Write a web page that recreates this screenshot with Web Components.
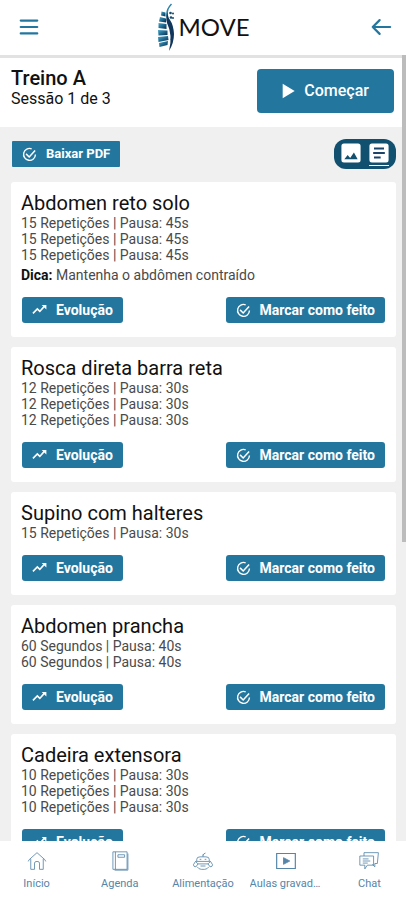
<!DOCTYPE html>
<html lang="pt-BR">
<head>
<meta charset="utf-8">
<meta name="viewport" content="width=device-width, initial-scale=1">
<title>Move – Treino A</title>
<style>
  :root {
    --brand: #23779f;
    --brand-dark: #12506f;
    --surface: #fff;
    --page: #f0f0f0;
  }
  body {
    margin: 0;
    font-family: Roboto, "Liberation Sans", sans-serif;
    color: #111;
    background: var(--surface);
  }
</style>
</head>
<body>
<move-app>
  <app-header slot="header"></app-header>
  <session-bar name="Treino A" progress="Sessão 1 de 3"></session-bar>
  <list-tools></list-tools>
  <exercise-list>
    <exercise-card name="Abdomen reto solo" tip="Mantenha o abdômen contraído">
      <span>15 Repetições | Pausa: 45s</span>
      <span>15 Repetições | Pausa: 45s</span>
      <span>15 Repetições | Pausa: 45s</span>
    </exercise-card>
    <exercise-card name="Rosca direta barra reta">
      <span>12 Repetições | Pausa: 30s</span>
      <span>12 Repetições | Pausa: 30s</span>
      <span>12 Repetições | Pausa: 30s</span>
    </exercise-card>
    <exercise-card name="Supino com halteres">
      <span>15 Repetições | Pausa: 30s</span>
    </exercise-card>
    <exercise-card name="Abdomen prancha">
      <span>60 Segundos | Pausa: 40s</span>
      <span>60 Segundos | Pausa: 40s</span>
    </exercise-card>
    <exercise-card name="Cadeira extensora">
      <span>10 Repetições | Pausa: 30s</span>
      <span>10 Repetições | Pausa: 30s</span>
      <span>10 Repetições | Pausa: 30s</span>
    </exercise-card>
  </exercise-list>
  <tab-bar slot="footer">
    <tab-item icon="home">Início</tab-item>
    <tab-item icon="book">Agenda</tab-item>
    <tab-item icon="food">Alimentação</tab-item>
    <tab-item icon="video">Aulas gravadas</tab-item>
    <tab-item icon="chat">Chat</tab-item>
  </tab-bar>
</move-app>

<script>
const ICONS = {
  menu: '<path d="M3 5h18M3 12h18M3 19h18" stroke-width="2.4" stroke-linecap="round"/>',
  back: '<path d="M22 12H3M10.500 4.500L3 12l7.500 7.500" stroke-width="2.400" stroke-linecap="round" stroke-linejoin="round"/>',
  play: '<path d="M4 1l18 11L4 23z" fill="currentColor" stroke="none"/>',
  check: '<path d="M15.500 3A9.500 9.500 0 1 0 21.500 12" stroke-width="2.200"/><path d="M6.500 11l5 5L21 5.500" stroke-width="2.400"/>',
  trend: '<path d="M1.500 16.500l7-7 4 4L20 5" stroke-width="2.600"/><path d="M15.500 3H23v7.500z" fill="currentColor" stroke="none"/>',
  image: '<rect x="0.500" y="0.500" width="23" height="23" rx="3" fill="currentColor" stroke="none"/><path d="M4 19.500l4-5 3 3.500 4.500-6.500L20 19.500z" fill="#12506f" stroke="none"/>',
  text: '<rect x="0.500" y="0.500" width="23" height="23" rx="3" fill="currentColor" stroke="none"/><path d="M6 6.500h12M5 12h14M6 17.500h8" stroke="#1b4468" stroke-width="2.400"/>',
  home: '<path d="M2.500 10.500L12 2l9.500 8.500M4.500 9.500V22H9v-7.500q0-2 3-2t3 2V22h4.500V9.500M1.500 12.500l1-2M22.500 12.500l-1-2"/>',
  book: '<path d="M3.500 1h17v21h-17zM6.500 1v21M9.500 4.500h8v3h-8zM21.500 3v20h-16"/>',
  food: '<path d="M12 7V4M12 5.500q1-3 3-3M4.500 12V10q0-3 4-3h7q4 0 4 3v2M3 12.500h18M8 10h2M14 10h2M3 12.500l-2.500 4q0 2.500 3 2.500l2.500-3.500zM21 12.500l2.500 4q0 2.500-3 2.500L18 15.500zM6 15.500h12M5 19q2 3 5 3h4q3 0 5-3M9 18h6"/>',
  video: '<path d="M0.800 3h22.400v18H.800z" stroke-width="1.400"/><path d="M9 8l7.500 4L9 16z" fill="currentColor"/>',
  chat: '<path d="M6 6V2h17.300l-1.300 13h-3v4l-3-3"/><path d="M1 6h16.500v11H10l-3 4.500V17H1zM4.500 9.500h7M4.500 12h9M4.500 14.500h6"/>'
};

/* Base class: clones the element's template into an open shadow root. */
class Component extends HTMLElement {
  connectedCallback() {
    if (this.shadowRoot) return;
    const t = document.createElement('template');
    t.innerHTML = this.render();
    this.attachShadow({ mode: 'open' }).append(t.content.cloneNode(true));
  }
  attr(n) { return this.getAttribute(n) || ''; }
}

class UiIcon extends Component {
  render() {
    return `<style>
      :host { display: block; flex: none; width: 16px; height: 16px; }
      svg { display: block; width: 100%; height: 100%; overflow: visible; }
    </style>
    <svg viewBox="0 0 24 24" fill="none" stroke="currentColor" aria-hidden="true">${ICONS[this.attr('name')]}</svg>`;
  }
}

class ActionButton extends Component {
  render() {
    return `<style>
      :host { display: inline-block; }
      button {
        display: flex; align-items: center; gap: 9px;
        height: 26px; padding: 0 10px; border: 0; border-radius: 3px;
        background: var(--brand); color: #fff; cursor: pointer;
        font: 700 14px/16px Roboto, "Liberation Sans", sans-serif;
      }
      ui-icon { width: 15px; height: 15px; }
      :host([size="small"]) button { font-size: 13px; border-radius: 1px; }
      :host([size="large"]) button { font-size: 16px; font-weight: 500; height: 44px; padding: 0 25px 0 23px; gap: 8px; border-radius: 4px; }
      :host([size="large"]) ui-icon { width: 16px; height: 16px; }
    </style>
    <button type="button"><ui-icon name="${this.attr('icon')}"></ui-icon><slot></slot></button>`;
  }
}

class BrandLogo extends Component {
  render() {
    return `<style>
      :host { display: flex; align-items: center; gap: 4px; margin-right: 4px; font: 400 24px/32px Lato, sans-serif; color: #111; }
      svg { display: block; width: 18px; height: 48px; }
    </style>
    <svg viewBox="0 0 18 48" aria-hidden="true">
      <defs><linearGradient id="g" x1="0" y1="0" x2="1" y2="1"><stop offset="0" stop-color="#4aa6c8"/><stop offset="0.500" stop-color="#1f6a91"/><stop offset="1" stop-color="#0c2748"/></linearGradient></defs>
      <g fill="url(#g)">
        <path d="M5.500 8.500l4 1v4l-4.500-1z"/>
        <path d="M4 14l6 1.500v4l-7-1z"/>
        <path d="M2.500 20l8 1v5l-8-1z"/>
        <path d="M2 27l9.500.500v4.500l-9 .5z"/>
        <path d="M2 34l10-1 .500 4-10 2z"/>
        <path d="M3 40l9-2-.500 4-8 2z"/>
      </g>
      <g fill="#174b70">
        <circle cx="14.500" cy="10" r="1.300"/><circle cx="17" cy="10.500" r="1"/>
        <circle cx="15" cy="14.500" r="1.300"/><circle cx="17" cy="15" r="1"/>
      </g>
      <path d="M15.500 1Q9 8 11.500 15q3 5 4.500 11t-1 11" fill="none" stroke="#2b83ab" stroke-width="1.400"/>
      <path d="M12.500 7q-2 5 1.500 10t4 14q0 9-5 17 2-8 1.500-15t-3.500-13q-2-7 1.500-13z" fill="#10365b"/>
    </svg><span>MOVE</span>`;
  }
}

class AppHeader extends Component {
  render() {
    return `<style>
      :host { display: grid; grid-template-columns: 1fr auto 1fr; align-items: center; box-sizing: border-box; height: 55px; padding: 0 14px 2px 18px; background: var(--surface); }
      button { display: block; border: 0; padding: 0; background: none; color: var(--brand); cursor: pointer; }
      button:first-child { justify-self: start; }
      button:last-child { justify-self: end; }
      ui-icon { width: 22px; height: 22px; }
    </style>
    <button type="button" aria-label="Menu"><ui-icon name="menu"></ui-icon></button>
    <brand-logo></brand-logo>
    <button type="button" aria-label="Voltar"><ui-icon name="back"></ui-icon></button>`;
  }
}

class SessionBar extends Component {
  render() {
    return `<style>
      :host { display: flex; justify-content: space-between; align-items: flex-start; padding: 11px 12px 14px 11px; background: var(--surface); }
      h1 { margin: 0; font: 500 20px/18px Roboto, sans-serif; }
      p { margin: 0; font-size: 16px; line-height: 24px; }
    </style>
    <div><h1>${this.attr('name')}</h1><p>${this.attr('progress')}</p></div>
    <action-button size="large" icon="play">Começar</action-button>`;
  }
}

class ListTools extends Component {
  render() {
    return `<style>
      :host { display: flex; justify-content: space-between; align-items: center; padding: 12px 10px 13px 12px; }
      div { display: flex; gap: 8px; padding: 4px 7px 3px; border-radius: 12px; background: var(--brand-dark); }
      button { display: block; padding: 0 0 2px; border: 0; border-bottom: 1px solid transparent; background: none; color: #fff; cursor: pointer; }
      button[aria-pressed="true"] { border-color: #fff; }
      ui-icon { width: 20px; height: 20px; }
    </style>
    <action-button size="small" icon="check">Baixar PDF</action-button>
    <div role="group" aria-label="Visualização">
      <button type="button" aria-label="Imagens" aria-pressed="false"><ui-icon name="image"></ui-icon></button>
      <button type="button" aria-label="Texto" aria-pressed="true"><ui-icon name="text"></ui-icon></button>
    </div>`;
  }
}

class ExerciseList extends Component {
  render() {
    return `<style>:host { display: flex; flex-direction: column; gap: 10px; padding: 0 10px 10px 11px; }</style><slot></slot>`;
  }
}

class ExerciseCard extends Component {
  render() {
    const tip = this.attr('tip');
    return `<style>
      :host { display: block; padding: 10px 11px 14px 10px; border-radius: 3px; background: var(--surface); }
      h2 { margin: 0; font: 400 20px/23px Roboto, sans-serif; }
      .sets, .tip { font-size: 14px; line-height: 16px; color: #4a4a4a; }
      ::slotted(span) { display: block; }
      .tip { margin: 4px 0 0; }
      b { color: #111; }
      footer { display: flex; justify-content: space-between; margin: 14px 0 0 1px; }
    </style>
    <h2>${this.attr('name')}</h2>
    <div class="sets"><slot></slot></div>
    ${tip ? `<p class="tip"><b>Dica:</b> ${tip}</p>` : ''}
    <footer>
      <action-button icon="trend">Evolução</action-button>
      <action-button icon="check">Marcar como feito</action-button>
    </footer>`;
  }
}

class TabBar extends Component {
  render() {
    return `<style>
      :host { display: block; overflow: hidden; background: var(--surface); }
      nav { display: grid; grid-template-columns: repeat(5, minmax(0, 1fr)); margin: 0 -5px; }
    </style><nav aria-label="Principal"><slot></slot></nav>`;
  }
}

class TabItem extends Component {
  render() {
    return `<style>
      a { display: flex; flex-direction: column; align-items: center; gap: 5px; padding: 10px 5px 9px; color: #5585a8; text-decoration: none; font-size: 11px; line-height: 15px; }
      :host { display: block; min-width: 0; }
      ui-icon { width: 20px; height: 20px; }
      span { max-width: 100%; overflow: hidden; text-overflow: ellipsis; white-space: nowrap; }
    </style>
    <a href="#"><ui-icon name="${this.attr('icon')}"></ui-icon><span><slot></slot></span></a>`;
  }
}

class MoveApp extends Component {
  render() {
    return `<style>
      :host { display: flex; flex-direction: column; height: 100vh; }
      .view { position: relative; flex: 1; min-height: 0; display: flex; flex-direction: column; background: var(--page); }
      main { flex: 1; min-height: 0; overflow-y: auto; scrollbar-width: none; border-top: 3px solid #e2e2e2; }
      .thumb { position: absolute; top: 0; right: 0; width: 4px; height: 62%; background: #bcbcbc; }
    </style>
    <slot name="header"></slot>
    <div class="view"><main><slot></slot></main><div class="thumb"></div></div>
    <slot name="footer"></slot>`;
  }
}

const parts = {
  'ui-icon': UiIcon, 'action-button': ActionButton, 'brand-logo': BrandLogo,
  'app-header': AppHeader, 'session-bar': SessionBar, 'list-tools': ListTools,
  'exercise-list': ExerciseList, 'exercise-card': ExerciseCard,
  'tab-bar': TabBar, 'tab-item': TabItem, 'move-app': MoveApp
};
for (const [tag, cls] of Object.entries(parts)) customElements.define(tag, cls);
</script>
</body>
</html>
